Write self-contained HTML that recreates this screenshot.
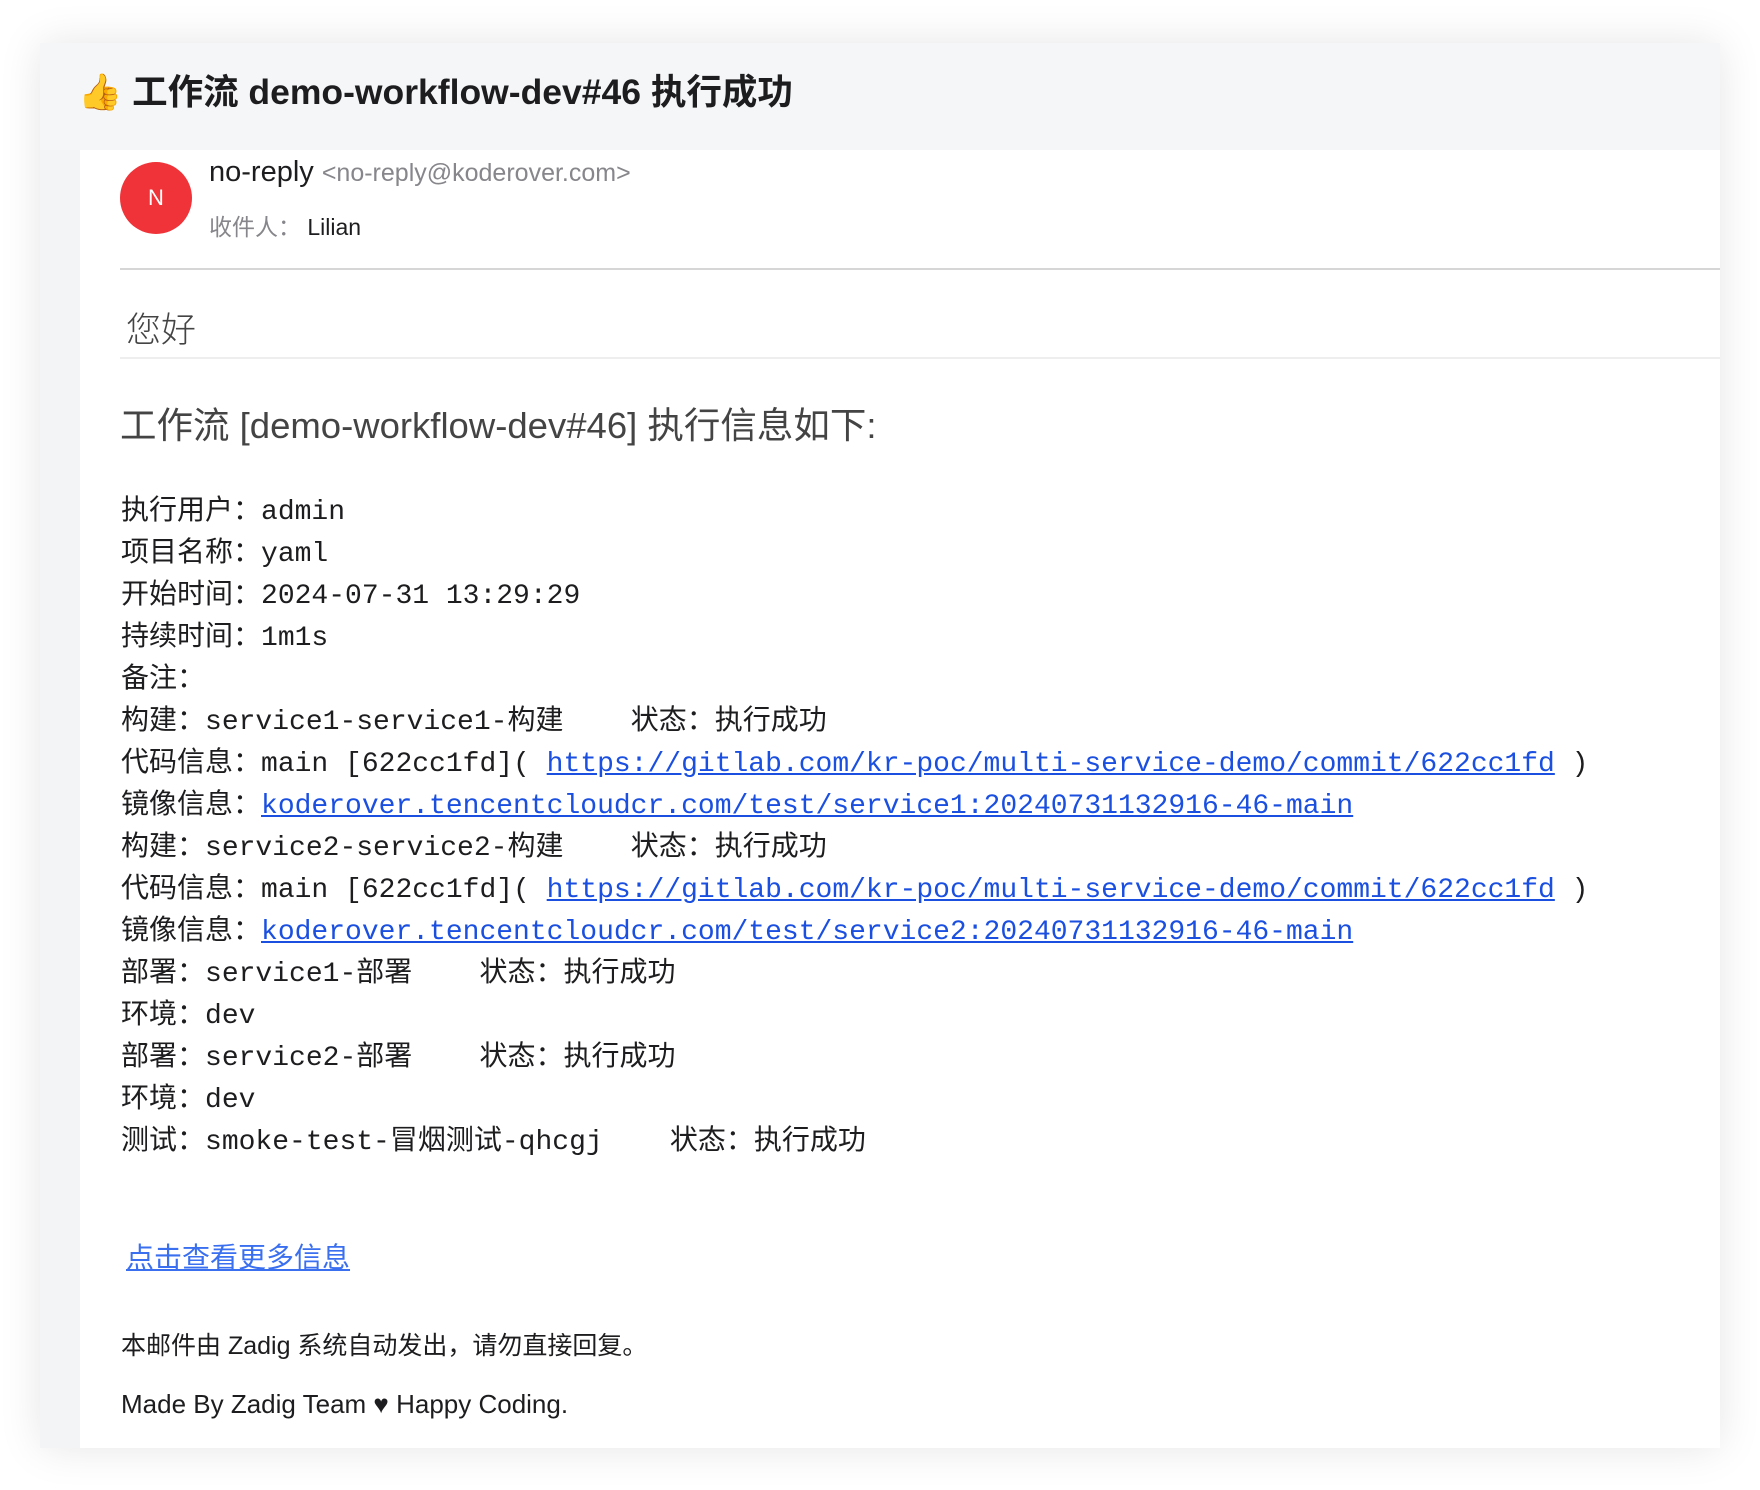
<!DOCTYPE html>
<html><head><meta charset="utf-8"><style>
*{margin:0;padding:0;box-sizing:border-box}
body{width:1760px;height:1490px;background:#fff;position:relative;overflow:hidden;font-family:"Liberation Sans","Noto Sans CJK SC",sans-serif;color:#1d1d1f}
.card{position:absolute;left:40px;top:43px;width:1680px;height:1405px;background:#f3f4f6;box-shadow:0 0 40px rgba(0,0,0,0.10)}
.hdr{position:absolute;left:0;top:0;width:1680px;height:107px;background:#f5f6f8}
.title{position:absolute;left:38px;top:21px;font-size:35.5px;font-weight:bold;color:#1d1d1f;white-space:nowrap}
.body{position:absolute;left:40px;top:107px;width:1640px;height:1298px;background:#fff}
.av{position:absolute;left:40px;top:12px;width:72px;height:72px;border-radius:50%;background:#ef3338;color:#fff;font-size:22px;text-align:center;line-height:72px}
.abs{position:absolute;white-space:pre}
.mono{font-family:"Liberation Mono",monospace;font-size:28px}
a{color:#1a4fe0;text-decoration:underline}
.ln{position:absolute;left:41px;font-size:28px;line-height:45px;height:45px;white-space:pre}
</style></head><body>
<div class="card">
<div class="hdr"><div class="title">👍 工作流 demo-workflow-dev#46 执行成功</div></div>
<div class="body">
<div class="av">N</div>
<div class="abs" style="left:129px;top:6px;font-size:29px">no-reply <span style="font-size:25px;color:#86868b">&lt;no-reply@koderover.com&gt;</span></div>
<div class="abs" style="left:129px;top:58px;font-size:23px"><span style="color:#86868b">收件人：</span> Lilian</div>
<div style="position:absolute;left:40px;top:118px;width:1600px;height:2px;background:#d6d6d6"></div>
<div class="abs" style="left:46px;top:152px;font-size:35px;color:#444;font-weight:300">您好</div>
<div style="position:absolute;left:40px;top:207px;width:1600px;height:2px;background:#eeeeee"></div>
<div class="abs" style="left:40px;top:246px;font-size:36.5px;color:#444">工作流 [demo-workflow-dev#46] 执行信息如下:</div>
<div class="ln" style="top:337px">执行用户：<span class="mono">admin</span></div>
<div class="ln" style="top:379px">项目名称：<span class="mono">yaml</span></div>
<div class="ln" style="top:421px">开始时间：<span class="mono">2024-07-31 13:29:29</span></div>
<div class="ln" style="top:463px">持续时间：<span class="mono">1m1s</span></div>
<div class="ln" style="top:505px">备注：</div>
<div class="ln" style="top:547px">构建：<span class="mono">service1-service1-</span>构建<span class="mono">    </span>状态：执行成功</div>
<div class="ln" style="top:589px">代码信息：<span class="mono">main [622cc1fd]( <a href="#">https://gitlab.com/kr-poc/multi-service-demo/commit/622cc1fd</a> )</span></div>
<div class="ln" style="top:631px">镜像信息：<span class="mono"><a href="#">koderover.tencentcloudcr.com/test/service1:20240731132916-46-main</a></span></div>
<div class="ln" style="top:673px">构建：<span class="mono">service2-service2-</span>构建<span class="mono">    </span>状态：执行成功</div>
<div class="ln" style="top:715px">代码信息：<span class="mono">main [622cc1fd]( <a href="#">https://gitlab.com/kr-poc/multi-service-demo/commit/622cc1fd</a> )</span></div>
<div class="ln" style="top:757px">镜像信息：<span class="mono"><a href="#">koderover.tencentcloudcr.com/test/service2:20240731132916-46-main</a></span></div>
<div class="ln" style="top:799px">部署：<span class="mono">service1-</span>部署<span class="mono">    </span>状态：执行成功</div>
<div class="ln" style="top:841px">环境：<span class="mono">dev</span></div>
<div class="ln" style="top:883px">部署：<span class="mono">service2-</span>部署<span class="mono">    </span>状态：执行成功</div>
<div class="ln" style="top:925px">环境：<span class="mono">dev</span></div>
<div class="ln" style="top:967px">测试：<span class="mono">smoke-test-</span>冒烟测试<span class="mono">-qhcgj    </span>状态：执行成功</div>
<div class="abs" style="left:46px;top:1086px;font-size:28px"><a href="#" style="color:#3a6ff0">点击查看更多信息</a></div>
<div class="abs" style="left:41px;top:1176px;font-size:25px">本邮件由 Zadig 系统自动发出，请勿直接回复。</div>
<div class="abs" style="left:41px;top:1239px;font-size:26px">Made By Zadig Team ♥ Happy Coding.</div>
</div>
</div>
</body></html>
